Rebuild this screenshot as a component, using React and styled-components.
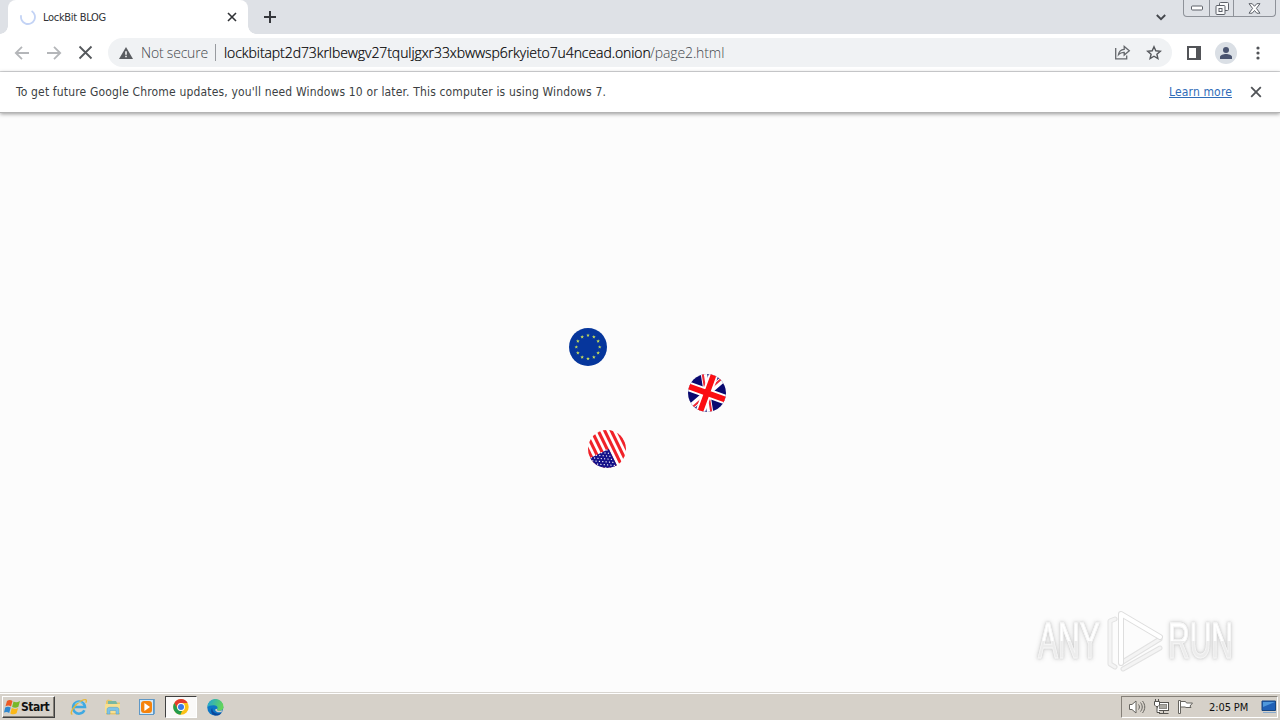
import React from 'react';
import styled, { createGlobalStyle } from 'styled-components';

const EU_STARS = Array.from({ length: 12 }, (_, i) => i * 30);
const US_STARS = [0, 1, 2, 3, 4, 5, 6];

const PAGE_HOST = 'lockbitapt2d73krlbewgv27tquljgxr33xbwwsp6rkyieto7u4ncead.onion';

const CloseIcon = ({ size, width }) => (
    <svg width={size} height={size} viewBox="0 0 10 10" fill="none" stroke="currentColor" strokeWidth={width}>
        <path d="M1 1l8 8M9 1l-8 8" />
    </svg>
);

const TabStrip = () => (
    <Strip>
        <Tab>
            <svg width="16" height="16" viewBox="0 0 16 16">
                <path d="M1.2 6.2A7 7 0 1 0 11.6 2" fill="none" stroke="#c3d3f5" strokeWidth="1.8" />
            </svg>
            <TabTitle>LockBit BLOG</TabTitle>
            <TabClose><CloseIcon size={10} width={1.6} /></TabClose>
        </Tab>
        <NewTab>
            <svg width="12" height="12" viewBox="0 0 12 12" stroke="#35373c" strokeWidth="2"><path d="M6 0v12M0 6h12" /></svg>
        </NewTab>
        <TabSearch>
            <svg width="10" height="7" viewBox="0 0 10 7" fill="none" stroke="#44474d" strokeWidth="1.9"><path d="M.8 1L5 5.2 9.2 1" /></svg>
        </TabSearch>
        <Caption>
            <CaptionButton $width={25}>
                <svg width="14" height="6" viewBox="0 0 14 6"><rect x="1.5" y="1" width="11" height="4" rx="1" fill="#fff" stroke="#5c6068" /></svg>
            </CaptionButton>
            <CaptionButton $width={24}>
                <svg width="14" height="13" viewBox="0 0 14 13" fill="#f8f9fa" stroke="#5c6068">
                    <rect x="4.5" y=".5" width="9" height="8" rx="1" />
                    <rect x="1" y="3.5" width="9" height="9" rx="1" />
                    <rect x="4" y="6.5" width="3" height="3" />
                </svg>
            </CaptionButton>
            <CaptionButton $width={42}>
                <svg width="13" height="11" viewBox="0 0 13 11" fill="#fff" stroke="#5c6068">
                    <path d="M1 .7h3.2l2.3 2.6L8.8.7H12L8.4 5.4 12 10.2H8.8L6.5 7.5l-2.3 2.7H1l3.6-4.8z" />
                </svg>
            </CaptionButton>
        </Caption>
    </Strip>
);

const Toolbar = () => (
    <Bar>
        <NavButtons>
            <svg width="16" height="14" viewBox="0 0 16 14" fill="none" stroke="#b4b6b9" strokeWidth="1.8"><path d="M15 7H2M8 .8L1.8 7 8 13.2" /></svg>
            <svg width="16" height="14" viewBox="0 0 16 14" fill="none" stroke="#b4b6b9" strokeWidth="1.8"><path d="M1 7h13M8 .8L14.2 7 8 13.2" /></svg>
            <CloseIcon size={15} width={1.2} />
        </NavButtons>
        <Omnibox>
            <svg width="14" height="12" viewBox="0 0 14 12">
                <path d="M7 0l7 12H0z" fill="#5a5d61" />
                <path d="M7 4.3v3.4M7 8.8v1.5" stroke="#fff" strokeWidth="1.5" />
            </svg>
            <NotSecure>Not secure</NotSecure>
            <Divider />
            <Host>{PAGE_HOST}</Host>
            <Path>/page2.html</Path>
            <OmniActions>
                {/* share */}
                <svg width="17" height="15" viewBox="0 0 17 15" fill="none" stroke="#65686c" strokeWidth="1.3">
                    <path d="M1.7 3v10.8h11V10.5" />
                    <path d="M4.5 9.6C5 6.2 7 4.5 10.2 4.3V1.5l5.1 4.3-5.1 4.2V7.3C7.8 7.2 6 7.9 4.5 9.6z" />
                </svg>
                {/* bookmark star */}
                <svg width="16" height="15" viewBox="0 0 16 15" fill="none" stroke="#55585c" strokeWidth="1.4">
                    <path d="M8 1.8l1.8 4 4.5.4-3.4 3 1 4.3L8 11.2l-3.9 2.3 1-4.3-3.4-3 4.5-.4z" />
                </svg>
            </OmniActions>
        </Omnibox>
        <ToolbarActions>
            <svg width="14" height="14" viewBox="0 0 14 14"><rect x="1" y="1" width="12" height="12" fill="none" stroke="#525458" strokeWidth="2" /><rect x="9" y="1" width="5" height="12" fill="#525458" /></svg>
            <Avatar>
                <svg width="12" height="12" viewBox="0 0 12 12" fill="#4a5470"><circle cx="6" cy="3" r="3" /><path d="M0 12V10c0-2 3.5-3 6-3s6 1 6 3v2z" /></svg>
            </Avatar>
            <svg width="4" height="14" viewBox="0 0 4 14" fill="#525458"><circle cx="2" cy="2" r="1.6" /><circle cx="2" cy="7" r="1.6" /><circle cx="2" cy="12" r="1.6" /></svg>
        </ToolbarActions>
    </Bar>
);

const EuFlag = () => (
    <svg width="38" height="38" viewBox="-19 -19 38 38">
        <circle r="19" fill="#06369c" />
        {EU_STARS.map((angle) => (
            <g key={angle} transform={`rotate(${angle}) translate(0 -11.7) rotate(${-angle})`}>
                <path d="M0-1.8L.5-.6 1.8-.6.8.3 1.1 1.6 0 .8-1.1 1.6-.8.3-1.8-.6-.5-.6z" fill="#c5dc5a" />
            </g>
        ))}
    </svg>
);

const UkFlag = () => (
    <svg width="38" height="38" viewBox="-19 -19 38 38">
        <clipPath id="uk"><circle r="19" /></clipPath>
        <g clipPath="url(#uk)">
            <g transform="rotate(110)">
                <rect x="-20" y="-20" width="40" height="40" fill="#0a0a70" />
                <path d="M-36-20L36 20M36-20L-36 20" stroke="#fff" strokeWidth="6.4" />
                <path d="M-36-18.6L0 1.4M36 18.6L0-1.4M36-21.4L0-1.4M-36 21.4L0 1.4" stroke="#ee2a38" strokeWidth="2.1" />
                <path d="M0-20v40M-20 0h40" stroke="#fff" strokeWidth="9.6" />
                <path d="M0-20v40M-20 0h40" stroke="#fb0d12" strokeWidth="5.8" />
            </g>
        </g>
    </svg>
);

const UsFlag = () => (
    <svg width="38" height="38" viewBox="-19 -19 38 38">
        <clipPath id="us"><circle r="19" /></clipPath>
        <g clipPath="url(#us)">
            <g transform="rotate(-116)">
                <rect x="-20" y="-20" width="40" height="40" fill="#fff" />
                {US_STARS.map((n) => <rect key={n} x="-20" y={-19 + n * 5.85} width="40" height="3.1" fill="#f02229" />)}
                <rect x="-20" y="-20" width="19.2" height="21.7" fill="#15128a" />
                {US_STARS.map((row) => US_STARS.slice(0, 6).map((col) => (
                    <circle key={`${row}-${col}`} cx={-18 + col * 3.4 - (row % 2) * 1.7} cy={-18 + row * 2.9} r="0.65" fill="#fff" />
                )))}
            </g>
        </g>
    </svg>
);

const Watermark = () => (
    <Mark>
        <MarkWord><span>ANY</span></MarkWord>
        <svg width="58" height="64" viewBox="0 0 58 64" fill="none" strokeLinejoin="round" strokeLinecap="round">
            <path d="M9 10L4 12v43l5 3M17 60l37-21M15 54l39-24" stroke="#e2e2e2" strokeWidth="5" />
            <path d="M9 10L4 12v43l5 3M17 60l37-21M15 54l39-24" stroke="#f4f4f4" strokeWidth="3" />
            <path d="M15 54V5l39 23" stroke="#dedede" strokeWidth="6" />
            <path d="M15 54V5l39 23" stroke="#fff" strokeWidth="4" />
        </svg>
        <MarkWord><span>RUN</span></MarkWord>
    </Mark>
);

const Taskbar = () => (
    <TaskRow>
        <StartButton>
            <svg width="17" height="16" viewBox="0 0 17 16">
                <path d="M3 2c2-1.5 4-1 5.5 0L7 7.5C5.3 6.3 3.4 6.3 1.5 7.3z" fill="#ed5a24" />
                <path d="M9.5 2.6c2 1 4 .9 6.5-.5l-1.6 5.6c-2 1.4-4.3 1.2-6.3.2z" fill="#78b82a" />
                <path d="M1.2 8.4c2-1 3.8-1 5.5.2L5.2 14C3.5 12.9 2 12.8 0 13.6z" fill="#3088cf" />
                <path d="M7.8 9.1c2 1.1 4.2 1.1 6.3-.1l-1.5 5.3c-2 1.3-4.3 1.2-6.3.1z" fill="#fbb818" />
            </svg>
            Start
        </StartButton>
        <Launcher>
            {/* internet explorer */}
            <svg width="18" height="18" viewBox="0 0 18 18" fill="none">
                <path d="M14.4 12.3A6 6 0 1 1 15 9H4" stroke="#3fa9e2" strokeWidth="2.5" />
                <path d="M2.4 16.4C-1.5 15.5 5 6.1 11 3c4.8-2.6 6.3-1.4 4.8 1.7" stroke="#e6b83b" strokeWidth="1.4" />
                <path d="M5 6.2C7 3.5 11 3.7 12.8 6" stroke="#8bd6f7" strokeWidth=".8" />
            </svg>
        </Launcher>
        <Launcher>
            {/* explorer folder */}
            <svg width="18" height="18" viewBox="0 0 18 18">
                <path d="M2 3l2-1.5 4 1 1 2h7v12H2z" fill="#e7c66a" />
                <path d="M4 3h8l2 4H4z" fill="#79b8a1" />
                <path d="M1 6h15v9H1z" fill="#f7df91" />
                <path d="M3 16v-4c0-2 1-2.7 3-2.7h6c2 0 3 .7 3 2.7v4h-3v-3.5H6V16z" fill="#7fc3e6" stroke="#529fc9" strokeWidth=".5" />
            </svg>
        </Launcher>
        <Launcher>
            {/* media player */}
            <svg width="18" height="18" viewBox="0 0 18 18">
                <rect x="3.5" y="1.5" width="13" height="14" fill="#bcdcf2" stroke="#70a4cb" />
                <rect x="1.5" y="1.5" width="14" height="15" fill="#d3eafa" stroke="#5f98c6" />
                <rect x="3" y="3" width="11" height="12" rx="3" fill="#f5830c" />
                <path d="M6.4 5l5.6 4-5.6 4z" fill="#fff" />
            </svg>
        </Launcher>
        <Launcher $active>
            <svg width="16" height="16" viewBox="0 0 16 16">
                <circle cx="8" cy="8" r="7.7" fill="#fbc116" />
                <path d="M1.3 4A7.7 7.7 0 0 1 14.7 4H8a4 4 0 0 0-3.5 6z" fill="#e33b2e" />
                <path d="M1.3 4l3.4 6A4 4 0 0 0 9 11.9L7.4 15.7A7.7 7.7 0 0 1 1.3 4z" fill="#249c4d" />
                <circle cx="8" cy="8" r="3.9" fill="#fff" />
                <circle cx="8" cy="8" r="3" fill="#3979e8" />
            </svg>
        </Launcher>
        <Launcher>
            {/* edge */}
            <svg width="17" height="17" viewBox="0 0 17 17">
                <defs>
                    <linearGradient id="edge" x1="0" y1="0" x2="1" y2=".3"><stop offset="0" stopColor="#20a3dc" /><stop offset="1" stopColor="#62d45b" /></linearGradient>
                </defs>
                <circle cx="8.3" cy="8.5" r="8" fill="#0d76c6" />
                <path d="M.4 8A8 8 0 0 1 16.5 8c0 3-2.5 4-5 3.7-2-.3-1.5-1.2-1-2.2.4-2-1.3-3.3-3.5-3.3C3.5 6.1 1.2 7 .4 8z" fill="url(#edge)" />
                <path d="M5.2 9C5 13 8.5 15 12 14.6c1-.1 2-.5 2.8-1.1-2.3 3.8-6.3 3.4-8 2.5C3.7 14.6 3.5 10.7 5.2 9z" fill="#0b479b" />
                <path d="M10.5 9.4c-.8 1-.8 2.1 1 2.3 1.6.3 3.3-.1 4.3-1l-1.1 2.1c-3 1.3-6.4.1-6.6-2.3z" fill="#d4d0c8" />
            </svg>
        </Launcher>
        <Tray>
            <svg width="18" height="16" viewBox="0 0 18 16" fill="none" stroke="#66645f">
                <path d="M1.5 5.5H4L8 2v12l-4-3.5H1.5z" fill="#fff" />
                <path d="M10.5 5.5c1.2 1.6 1.2 3.4 0 5M12.5 3.5c2.3 3 2.3 6 0 9M14.5 2c3 4 3 8 0 12" />
            </svg>
            <svg width="17" height="16" viewBox="0 0 17 16" fill="none" stroke="#55534f">
                <rect x="4.5" y="3.5" width="11" height="8" fill="#fff" />
                <rect x="6.5" y="5.5" width="7" height="4" fill="#aaa8a2" stroke="#8d8b86" />
                <path d="M6 14.5h9.5M10.5 12v2" />
                <path d="M1.5 2.5h5V6L5 7.5H3L1.5 6zM2.5 0v2M5.5 0v2M4 8v5.5h3" fill="#fff" />
            </svg>
            <svg width="17" height="16" viewBox="0 0 17 16" fill="#fff" stroke="#66645f">
                <path d="M1.5 1.5h2v13h-2z" />
                <path d="M3.5 2.5h5l1 1.5h6L13 7l1 1.5H9L8 8H3.5z" />
            </svg>
            <Clock>2:05 PM</Clock>
            <svg width="16" height="14" viewBox="0 0 16 14">
                <path d="M1 1h13.5v9.5H1z" fill="#2060b6" stroke="#174580" />
                <path d="M2 2h12L2 7z" fill="#4f98dc" />
                <path d="M2 12h13v1H2z" fill="#87a9cc" />
            </svg>
        </Tray>
    </TaskRow>
);

const App = () => (
    <Desktop>
        <GlobalStyle />
        <TabStrip />
        <Toolbar />
        <InfoBar>
            <InfoText>To get future Google Chrome updates, you'll need Windows 10 or later. This computer is using Windows 7.</InfoText>
            <LearnMore>Learn more</LearnMore>
            <CloseIcon size={12} width={1.5} />
        </InfoBar>
        <Page>
            <Flag $x={569} $y={215}><EuFlag /></Flag>
            <Flag $x={688} $y={261}><UkFlag /></Flag>
            <Flag $x={588} $y={317}><UsFlag /></Flag>
            <Watermark />
        </Page>
        <Taskbar />
    </Desktop>
);

export default App;

const GlobalStyle = createGlobalStyle`
    body {
        margin: 0;
        overflow: hidden;
    }
    * {
        box-sizing: border-box;
    }
    svg {
        display: block;
        flex: none;
    }
`;

const Desktop = styled.div`
    display: grid;
    grid-template-rows: 34px 38px 41px 579px 28px;
    width: 1280px;
    height: 720px;
    font-family: "DejaVu Sans Condensed", "DejaVu Sans", Tahoma, sans-serif;
    font-stretch: condensed;
    white-space: nowrap;
    background: #fcfcfc;
`;

const Strip = styled.div`
    display: flex;
    background: #dee1e6;
    padding-left: 8px;
`;

const Tab = styled.div`
    position: relative;
    display: flex;
    align-items: center;
    width: 240px;
    padding: 0 11px 0 12px;
    background: #fff;
    border-radius: 8px 8px 0 0;
    color: #303236;
    /* curved feet where the tab meets the toolbar */
    &::before, &::after {
        content: '';
        position: absolute;
        bottom: 0;
        width: 8px;
        height: 8px;
    }
    &::before {
        left: -8px;
        background: radial-gradient(circle at 0 0, transparent 7.5px, #fff 8px);
    }
    &::after {
        right: -8px;
        background: radial-gradient(circle at 100% 0, transparent 7.5px, #fff 8px);
    }
`;

const TabTitle = styled.span`
    margin-left: 7px;
    font-size: 11px;
    letter-spacing: -0.3px;
`;

const TabClose = styled.div`
    margin-left: auto;
`;

const NewTab = styled.div`
    padding: 11px 0 0 16px;
`;

const TabSearch = styled.div`
    margin-left: auto;
    padding: 14px 17px 0 0;
`;

const Caption = styled.div`
    display: flex;
    height: 17px;
    margin-right: 4px;
    border: 1px solid #8e9299;
    border-top: none;
    border-radius: 0 0 4px 4px;
`;

const CaptionButton = styled.div`
    display: flex;
    align-items: center;
    justify-content: center;
    width: ${props => props.$width}px;
    & + & {
        border-left: 1px solid #8e9299;
    }
`;

const Bar = styled.div`
    display: flex;
    align-items: center;
    background: #fff;
    border-bottom: 1px solid #d9dadc;
`;

const NavButtons = styled.div`
    display: flex;
    align-items: center;
    gap: 16px;
    width: 108px;
    padding-left: 14px;
    color: #55585c;
`;

const Omnibox = styled.div`
    display: flex;
    align-items: center;
    width: 1064px;
    height: 29px;
    padding: 0 10px 0 11px;
    border-radius: 15px;
    background: #f0f2f4;
    font-family: "Open Sans", "Noto Sans", sans-serif;
    font-stretch: normal;
    font-size: 14px;
    font-weight: 300;
`;

const NotSecure = styled.span`
    width: 74px;
    margin-left: 8px;
    color: #45484c;
    letter-spacing: -0.2px;
`;

const Divider = styled.div`
    width: 1px;
    height: 17px;
    margin: 0 8px 0 0;
    background: #989b9f;
`;

const Host = styled.span`
    width: 426px;
    color: #000;
    letter-spacing: -0.07px;
    -webkit-text-stroke: 0.2px #000;
`;

const Path = styled.span`
    color: #45494e;
    letter-spacing: -0.1px;
`;

const OmniActions = styled.div`
    display: flex;
    align-items: center;
    gap: 15px;
    margin-left: auto;
`;

const ToolbarActions = styled.div`
    display: flex;
    align-items: center;
    padding-left: 15px;
    gap: 14px;
    & > :last-child {
        margin-left: 5px;
    }
`;

const Avatar = styled.div`
    display: flex;
    align-items: center;
    justify-content: center;
    width: 22px;
    height: 22px;
    border-radius: 50%;
    background: #dadfe5;
`;

const InfoBar = styled.div`
    display: flex;
    align-items: center;
    padding: 0 18px 1px 16px;
    background: #fff;
    border-bottom: 1px solid #b4b4b4;
    box-shadow: 0 1px 4px rgba(0, 0, 0, 0.4);
    font-size: 12px;
    color: #505357;
    z-index: 1;
`;

const InfoText = styled.span`
    color: #3c3f43;
    letter-spacing: 0.16px;
`;

const LearnMore = styled.span`
    margin-left: auto;
    margin-right: 18px;
    color: #2f6cb8;
    text-decoration: underline;
    letter-spacing: 0.15px;
`;

const Page = styled.main`
    position: relative;
    display: flex;
    align-items: flex-end;
    justify-content: flex-end;
    padding: 0 48px 19px 0;
    background: #fcfcfc;
`;

const Flag = styled.div`
    position: absolute;
    left: ${props => props.$x}px;
    top: ${props => props.$y}px;
`;

const Mark = styled.div`
    display: flex;
    align-items: center;
    gap: 4px;
`;

const MarkWord = styled.div`
    width: 64px;
    filter: drop-shadow(0 0 1px #cfcfcf) drop-shadow(0 0 2px #d8d8d8);
    & span {
        display: inline-block;
        font-family: "Liberation Sans", Arial, sans-serif;
        font-size: 50px;
        line-height: 60px;
        color: transparent;
        background: linear-gradient(#fff 50%, #ececec 50%);
        background-clip: text;
        -webkit-text-stroke: 1px #f6f6f6;
        transform: scaleX(0.6);
        transform-origin: 0 50%;
    }
`;

const TaskRow = styled.footer`
    display: flex;
    align-items: center;
    padding: 1px 2px 0;
    background: #d6d1c9;
    border-top: 1px solid #d8d5d0;
    box-shadow: inset 0 1px #fff;
`;

const StartButton = styled.div`
    display: flex;
    align-items: center;
    width: 53px;
    height: 22px;
    margin-right: 8px;
    padding-left: 1px;
    border: 1px solid;
    border-color: #fff #404040 #404040 #fff;
    box-shadow: inset -1px -1px #858078;
    font-size: 12px;
    font-weight: bold;
    letter-spacing: -0.5px;
    color: #111;
`;

const Launcher = styled.div`
    display: flex;
    align-items: center;
    justify-content: center;
    width: 32px;
    height: 22px;
    margin-right: 2px;
    border: 1px solid;
    border-color: ${props => props.$active ? '#404040 #fff #fff #404040' : 'transparent'};
    background: ${props => props.$active ? '#faf9f8' : 'none'};
`;

const Tray = styled.div`
    display: flex;
    align-items: center;
    gap: 7px;
    width: 157px;
    height: 22px;
    margin-left: auto;
    padding-left: 6px;
    border: 1px solid;
    border-color: #858078 #fff #fff #858078;
`;

const Clock = styled.span`
    width: 44px;
    margin: 0 4px 0 8px;
    font-size: 11px;
    letter-spacing: -0.1px;
    color: #111;
`;
